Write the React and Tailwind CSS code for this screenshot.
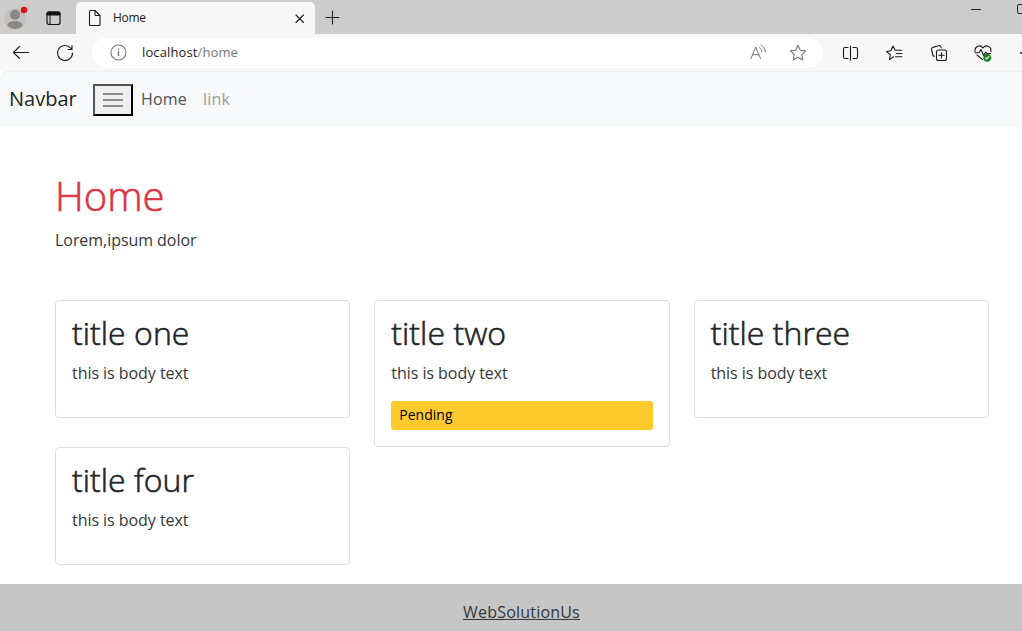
function Icon({ className, children, box = "0 0 20 20" }) {
  return (
    <svg className={"shrink-0 " + className} viewBox={box} fill="none" stroke="currentColor" strokeWidth="1.1" strokeLinecap="round" strokeLinejoin="round">
      {children}
    </svg>
  );
}

function TabStrip() {
  return (
    <div className="flex h-[34px] bg-[#cccccc] text-[#1b1b1b]">
      <svg className="mt-1 ml-[3px] h-[27px] w-[27px] shrink-0" viewBox="3 4 27 27">
        <circle cx="15" cy="19" r="11" fill="#c3c2c0" />
        <circle cx="15" cy="14.8" r="5" fill="#8a8886" />
        <path d="M7.3 25.5c0-6 15.4-6 15.4 0-4 4.700-11.500 4.700-15.400 0z" fill="#8a8886" />
        <circle cx="24" cy="10" r="3.200" fill="#e0101b" />
      </svg>
      <svg className="mt-[11px] ml-4 h-[15px] w-[15px] shrink-0" viewBox="0 0 15 15">
        <rect x="1" y="1" width="13" height="12.500" rx="2" fill="none" stroke="#111" strokeWidth="1.200" />
        <path d="M.5 4.500V2.500a2 2 0 0 1 2-2h10a2 2 0 0 1 2 2v2z" fill="#111" />
        <path d="M4 4v9.500" stroke="#111" strokeWidth="1" />
      </svg>
      <div className="ml-[15px] mt-[2px] flex h-8 w-[239px] items-center rounded-t-[5px] bg-[#f7f7f7] pl-[11px]">
        <Icon className="h-[18px] w-4" box="0 0 16 18">
          <path d="M2.500 2.500a1 1 0 0 1 1-1h4.500l5 5v9a1 1 0 0 1-1 1h-8.500a1 1 0 0 1-1-1zM8 1.500v4a1 1 0 0 0 1 1h4" />
        </Icon>
        <span className="ml-[10px] text-[12px] tracking-[-0.3px]">Home</span>
        <Icon className="mr-[10px] ml-auto h-[11px] w-[11px]" box="0 0 11 11">
          <path d="M2 2l7.500 7.500M9.500 2l-7.500 7.500" />
        </Icon>
      </div>
      <Icon className="mt-[10px] ml-[10px] h-[15px] w-[15px]" box="0 0 15 15">
        <path d="M7.500 1v13M1 7.500h13" />
      </Icon>
      <span className="mt-[9px] mr-9 ml-auto h-px w-[10px] shrink-0 bg-[#222]" />
      <span className="mt-1 -mr-[5px] h-[10px] w-[10px] shrink-0 rounded-[2px] border border-[#222]" />
    </div>
  );
}

function AddressBar() {
  return (
    <div className="flex h-[37px] items-center bg-[#f7f7f7] text-[#1b1b1b]">
      <Icon className="ml-3 h-[18px] w-[18px]" box="0 0 18 18">
        <path d="M16.500 8.500H1.500M7.500 2.500l-6 6 6 6" />
      </Icon>
      <Icon className="ml-[26px] h-[18px] w-[18px]" box="0 0 18 18">
        <path d="M16.500 9a7.500 7.500 0 1 1-2-5.100L16 5.400M16 1.500v4h-4" />
      </Icon>
      <div className="ml-[18px] flex h-[30px] w-[731px] shrink-0 items-center rounded-full bg-white pl-[18px] text-[#777]">
        <Icon className="h-[17px] w-[17px]" box="0 0 17 17">
          <circle cx="8.500" cy="8.500" r="7.500" />
          <path d="M8.500 7.800v4M8.500 5v.2" strokeWidth="1.400" />
        </Icon>
        <span className="ml-[15px] pt-px text-[13px] tracking-[0.12px]"><span className="text-[#1b1b1b]">localhost</span>/home</span>
        <svg className="ml-auto h-[18px] w-[17px] shrink-0" viewBox="0 0 17 18" fill="none" stroke="currentColor" strokeWidth="1" strokeLinecap="round" strokeLinejoin="round">
          <path d="M1 14.500L5.800 3l4.700 11.500M2.600 10.700h6.300M9.500 3.800c1.600.8 2.300 2 2.300 3.800M11 1.200c2.700 1.500 4.300 3.500 4.300 6.800" />
        </svg>
        <Icon className="mr-4 ml-[22px] h-[18px] w-[18px]" box="0 0 18 18">
          <path d="M9 1.400l2.300 4.800 5.300.7-3.900 3.700 1 5.300L9 13.300l-4.700 2.600 1-5.300L1.400 6.900l5.300-.7z" />
        </Icon>
      </div>
      <Icon className="ml-[19px] h-4 w-[17px]" box="0 0 17 16">
        <path d="M6 2.500H3A1.500 1.500 0 0 0 1.500 4v8A1.500 1.500 0 0 0 3 13.500h3M11 2.500h3A1.500 1.500 0 0 1 15.500 4v8a1.500 1.500 0 0 1-1.500 1.500h-3M8.500 1v14" />
      </Icon>
      <Icon className="ml-[26px] h-[18px] w-[19px]" box="0 0 19 18">
        <path d="M8.500 12.800l-4 2.800.8-4.800L1.500 7.500l4.300-.7L8 2l2.200 4.300h6.300M11.500 9.500h5.500M10.500 12.700h6.500" />
      </Icon>
      <Icon className="ml-[26px] h-[18px] w-[18px]" box="0 0 18 18">
        <rect x="6.500" y="6" width="10" height="10.500" rx="2" />
        <path d="M11.500 8.500v5.500M8.800 11.200h5.400M4.200 12.500L3 11.500 1.500 5.500c-.3-1 .3-1.800 1.200-2.100l6-1.700c1-.2 1.900.3 2.200 1.200l.4 1" />
      </Icon>
      <Icon className="ml-[26px] h-[18px] w-[18px]" box="0 0 18 18">
        <path d="M1 7.500C.4 1.500 6.500.4 9 4c2.500-3.600 8.400-2.500 8 3.500M1 8.800h4l2-3.300 2.700 6 2-3.500 1 1.500h3.800M3 11l5.500 4.700" />
        <circle cx="13.200" cy="13.800" r="3.700" fill="#16831c" stroke="#16831c" strokeWidth=".5" />
        <path d="M11.800 14l1 1 2-2.300" stroke="#fff" />
      </Icon>
      <span className="ml-[28px] h-[2px] w-[2px] shrink-0 rounded-full bg-[#222]" />
    </div>
  );
}

function Card({ title, pending }) {
  return (
    <div className={"rounded-[4px] border border-[#dfdfdf] px-4 pt-[13px] " + (pending ? "h-[147px]" : "h-[118px]")}>
      <h2 className="text-[32px] leading-[38px] font-light tracking-[0.05px] [-webkit-text-stroke:0.6px]">{title}</h2>
      <p className="mt-[9px] text-[16px] leading-6 tracking-[-0.05px] text-[#33373b]">this is body text</p>
      {pending && <div className="mt-4 h-[29px] rounded-[3px] bg-[#ffca2c] px-2 text-[14px] leading-[27px] text-black">Pending</div>}
    </div>
  );
}

export default function App() {
  return (
    <div className="flex h-[631px] w-[1022px] flex-col overflow-hidden bg-white font-['Open_Sans','Noto_Sans',sans-serif] text-[#212529]">
      <TabStrip />
      <AddressBar />
      <nav className="flex h-14 items-center rounded-tl-[8px] border-t border-[#f0f0f0] bg-[#f8f9fa] pl-[9px] text-[16px]">
        <span className="w-[68px] pb-0.5 text-[20px]">Navbar</span>
        <button className="ml-4 flex h-8 w-10 flex-col items-center justify-center gap-1 border-2 border-t-[#555] border-r-black border-b-black border-l-[#555] bg-[#efefef]">
          <span className="h-[2px] w-5 bg-[#8c8c8c]" />
          <span className="h-[2px] w-5 bg-[#8c8c8c]" />
          <span className="h-[2px] w-5 bg-[#8c8c8c]" />
        </button>
        <span className="ml-2 pb-0.5 tracking-[0.2px] text-[#4d5154]">Home</span>
        <span className="ml-4 pb-0.5 tracking-[0.2px] text-[#999b9d]">link</span>
      </nav>
      <main className="h-[457px] shrink-0 pt-[45px] pr-[33px] pl-[55px]">
        <h1 className="text-[40px] leading-[48px] font-light text-[#dc3545] [-webkit-text-stroke:0.6px]">Home</h1>
        <p className="mt-2 text-[16px] leading-6 tracking-[-0.05px] text-[#33373b]">Lorem,ipsum dolor</p>
        <div className="mt-12 grid grid-cols-3 items-start gap-x-6">
          <Card title="title one" />
          <Card title="title two" pending />
          <Card title="title three" />
          <Card title="title four" />
        </div>
      </main>
      <footer className="flex h-[47px] shrink-0 justify-center bg-[#c6c6c6] pt-4 pl-[21px]">
        <a className="text-[16px] leading-6 tracking-[0.2px] text-[#33373b] underline">WebSolutionUs</a>
      </footer>
    </div>
  );
}
